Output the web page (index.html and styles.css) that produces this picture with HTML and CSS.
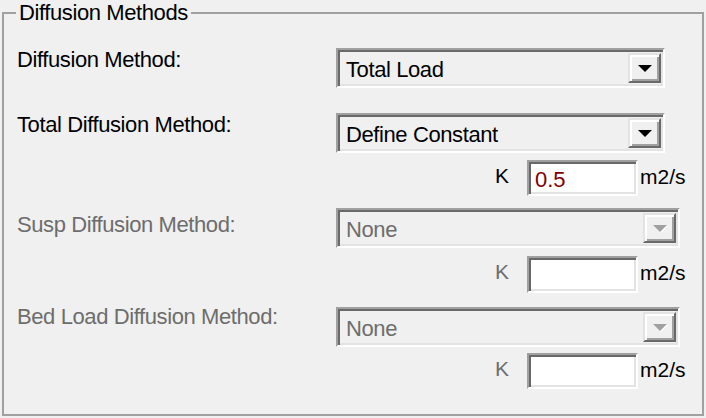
FILE: index.html
```html
<!DOCTYPE html>
<html>
<head>
<meta charset="utf-8">
<title>Diffusion Methods</title>
<link rel="stylesheet" href="styles.css">
</head>
<body>
<fieldset class="group">
  <legend class="group-title">Diffusion Methods</legend>

  <div class="row row-method">
    <div class="label">Diffusion Method:</div>
    <div class="combo">
      <span class="combo-text">Total Load</span>
      <span class="combo-btn"><span class="arrow"></span></span>
    </div>
  </div>

  <div class="row row-total">
    <div class="label">Total Diffusion Method:</div>
    <div class="combo">
      <span class="combo-text">Define Constant</span>
      <span class="combo-btn"><span class="arrow"></span></span>
    </div>
  </div>

  <div class="krow krow-total">
    <span class="k-label">K</span>
    <div class="field"><span class="field-value">0.5</span></div>
    <span class="unit">m2/s</span>
  </div>

  <div class="row row-susp disabled">
    <div class="label label-susp">Susp Diffusion Method:</div>
    <div class="combo combo-wide">
      <span class="combo-text">None</span>
      <span class="combo-btn"><span class="arrow"></span></span>
    </div>
  </div>

  <div class="krow krow-susp disabled">
    <span class="k-label">K</span>
    <div class="field"><span class="field-value"></span></div>
    <span class="unit">m2/s</span>
  </div>

  <div class="row row-bed disabled">
    <div class="label label-bed">Bed Load Diffusion Method:</div>
    <div class="combo combo-wide">
      <span class="combo-text">None</span>
      <span class="combo-btn"><span class="arrow"></span></span>
    </div>
  </div>

  <div class="krow krow-bed disabled">
    <span class="k-label">K</span>
    <div class="field"><span class="field-value"></span></div>
    <span class="unit">m2/s</span>
  </div>
</fieldset>
</body>
</html>
```

FILE: styles.css
```css
html, body {
  margin: 0;
  padding: 0;
  background: #f0f0f0;
  width: 706px;
  height: 418px;
  overflow: hidden;
}

body {
  padding-top: 1px;
  box-sizing: border-box;
  font-family: "Liberation Sans", Arial, sans-serif;
  font-size: 22px;
  letter-spacing: -0.4px;
  color: #000;
}

.group {
  box-sizing: border-box;
  width: 702px;
  min-width: 0;
  margin: 0 0 0 2px;
  padding: 0 12px 25px 12px;
  border: 2px solid #a0a0a0;
}

.group-title {
  padding: 0 3px;
  line-height: 24px;
}

.row {
  display: flex;
  align-items: flex-start;
  height: 40px;
}

.row-method { margin-top: 23px; }
.row-total { margin-top: 25px; }
.row-susp { margin-top: 12px; }
.row-bed { margin-top: 14px; }

.label {
  width: 319px;
  padding-left: 1px;
  line-height: 24px;
  white-space: nowrap;
}

.label-susp { margin-top: 5px; }
.label-bed { margin-top: -2px; }

.combo {
  box-sizing: border-box;
  width: 329px;
  height: 40px;
  display: flex;
  align-items: center;
  justify-content: space-between;
  border-style: solid;
  border-width: 2px;
  border-color: #a0a0a0 #ffffff #ffffff #a0a0a0;
  box-shadow: inset 2px 2px 0 #696969, inset -2px -2px 0 #e3e3e3;
  padding: 2px 2px 2px 2px;
  background: #f0f0f0;
}

.combo-wide { width: 344px; }

.combo-text {
  padding: 4px 0 0 6px;
  line-height: 24px;
  white-space: nowrap;
}

.combo-btn {
  box-sizing: border-box;
  width: 33px;
  height: 30px;
  display: flex;
  align-items: center;
  justify-content: center;
  background: #f0f0f0;
  border-style: solid;
  border-width: 2px;
  border-color: #e3e3e3 #696969 #696969 #e3e3e3;
  box-shadow: inset 2px 2px 0 #ffffff, inset -2px -2px 0 #a0a0a0;
}

.arrow {
  width: 0;
  height: 0;
  border-left: 7px solid transparent;
  border-right: 7px solid transparent;
  border-top: 7px solid #000;
  margin-top: 1px;
}

.krow {
  display: flex;
  align-items: flex-start;
  height: 36px;
  padding-left: 479px;
  font-size: 21px;
  letter-spacing: 0;
}

.krow-total { margin-top: 7px; }
.krow-susp { margin-top: 8px; height: 37px; }
.krow-bed { margin-top: 6px; }

.k-label {
  width: 32px;
  margin-top: 4px;
  line-height: 24px;
}

.field {
  box-sizing: border-box;
  width: 111px;
  height: 100%;
  border-style: solid;
  border-width: 2px;
  border-color: #a0a0a0 #ffffff #ffffff #a0a0a0;
  box-shadow: inset 2px 2px 0 #696969, inset -2px -2px 0 #e3e3e3;
  background: #ffffff;
  padding: 6px 0 0 6px;
}

.field-value {
  display: block;
  font-size: 22px;
  line-height: 24px;
  color: #800000;
}

.unit {
  margin-left: 2px;
  margin-top: 5px;
  line-height: 24px;
}

.disabled .label,
.disabled .combo-text,
.disabled .k-label {
  color: #6d6d6d;
}

.disabled .arrow {
  border-top-color: #a0a0a0;
  filter: drop-shadow(1px 1px 0 #ffffff);
}
```
